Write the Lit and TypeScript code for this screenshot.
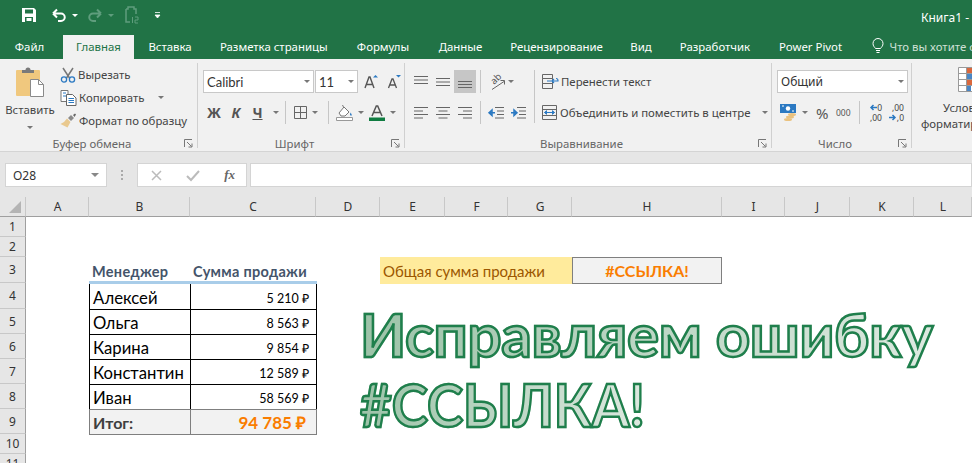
import { LitElement, html, css, svg } from "lit";
import { customElement } from "lit/decorators.js";

const TABS = [
  ["Файл", 63], ["Главная", 71], ["Вставка", 72], ["Разметка страницы", 135.5], ["Формулы", 83],
  ["Данные", 72], ["Рецензирование", 120], ["Вид", 49], ["Разработчик", 99], ["Power Pivot", 92],
] as const;

const COLS = ["A", "B", "C", "D", "E", "F", "G", "H", "I", "J", "K", "L"];
const ROWS = [1, 2, 3, 4, 5, 6, 7, 8, 9, 10, 11];

const SALES = [
  ["Алексей", "5 210 ₽"],
  ["Ольга", "8 563 ₽"],
  ["Карина", "9 854 ₽"],
  ["Константин", "12 589 ₽"],
  ["Иван", "58 569 ₽"],
];

const icon = (w: number, h: number, body: unknown) =>
  html`<svg width=${w} height=${h} viewBox="0 0 ${w} ${h}" fill="none">${body}</svg>`;

const caret = html`<span class="caret"></span>`;
const launcher = icon(9, 9, svg`<path d="M.5 8V.5H8M3 3l4.5 4.5M8 4.5V8H4.5" stroke="#777"/>`);

const lines = (rows: [number, number][], color = "#666") =>
  icon(16, 14, rows.map(([x1, x2], i) => svg`<path d="M${x1} ${1.5 + i * 3.5}H${x2}" stroke=${color}/>`));

const arrowL = icon(8, 7, svg`<path d="M8 3.500H2M4.500 1L2 3.500 4.500 6" stroke="#2b79c2" stroke-width="1.500"/>`);
const arrowR = icon(8, 7, svg`<path d="M0 3.500h6M3.500 1L6 3.500 3.500 6" stroke="#2b79c2" stroke-width="1.500"/>`);

const ICONS = {
  save: icon(16, 16, svg`<path d="M1 1h12l2 2v12H1z" fill="#fff"/><path d="M4 2.500h8v4H4z" fill="#217346"/><path d="M4 10h8v5H4z" fill="#217346"/><path d="M5.500 11h5v3h-5z" fill="#fff"/>`),
  undo: icon(16, 14, svg`<path d="M2 5.500l4-4M2 5.500l4 4M2 5.500h8a3.600 3.600 0 0 1 0 7.500H7" stroke="#fff" stroke-width="2"/>`),
  redo: icon(16, 14, svg`<path d="M14 5.500l-4-4M14 5.500l-4 4M14 5.500H6a3.600 3.600 0 0 0 0 7.500h3" stroke="#5f9d7d" stroke-width="2"/>`),
  touch: icon(16, 18, svg`<path d="M3 3h2V1h6v2h2v5M3 3v13h4" stroke="#5f9d7d" stroke-width="1.500"/><path d="M9.500 11v6M12 11h3v3h-3v3h3" stroke="#5f9d7d"/>`),
  custom: icon(7, 7, svg`<path d="M1 .500h5M1 3h5l-2.500 3z" fill="#fff" stroke="#fff" stroke-width=".8"/>`),
  paste: icon(30, 31, svg`<rect x="1" y="4" width="24" height="26" rx="1" fill="#f0c87e"/><path d="M7 7V4h3.500a2.500 2.500 0 0 1 5 0H19v3z" fill="#7a7a7a"/><path d="M15.500 13.500h8l5 5v12h-13z" fill="#fff" stroke="#8a8a8a"/><path d="M23.500 13.500v5h5" stroke="#8a8a8a"/>`),
  cut: icon(16, 16, svg`<path d="M3 1l6.500 10M13 1L6.500 11" stroke="#777" stroke-width="1.500"/><circle cx="4" cy="12.500" r="2.600" stroke="#2b79c2" stroke-width="1.300"/><circle cx="12" cy="12.500" r="2.600" stroke="#2b79c2" stroke-width="1.300"/>`),
  copy: icon(17, 16, svg`<path d="M1 .500h7v11H1z" fill="#fff" stroke="#777"/><path d="M3 3h3M3 6h3" stroke="#2b79c2"/><path d="M6.500 4.500h6l3.500 3.500v7.500H6.500z" fill="#fff" stroke="#666"/><path d="M8.500 8.500h5.500M8.500 10.500h5.500M8.500 12.500h5.500" stroke="#2b79c2"/>`),
  brush: icon(17, 15, svg`<path d="M8 5l3-3 3 3-3 3z" fill="#8a8a8a"/><path d="M13 2l2-1.500 1 1L14.500 4z" fill="#666"/><path d="M7 5.500l3.500 3.500-3 5.500-7-3.500L4 9z" fill="#e9c98f"/>`),
  grow: icon(14, 15, svg`<path d="M1 14L5 3h1l4 11M2.500 10.500h6" stroke="#555" stroke-width="1.400"/><path d="M9 3.500L11.500 1 14 3.500z" fill="#2b79c2"/>`),
  shrink: icon(14, 15, svg`<path d="M1.500 14L5 5h1l3.500 9M3 11h5" stroke="#555" stroke-width="1.300"/><path d="M9 1h5l-2.500 2.500z" fill="#2b79c2"/>`),
  borders: icon(13, 13, svg`<path d="M.5.500h12v12H.5zM6.500.500v12M.5 6.500h12" stroke="#666"/>`),
  fill: icon(17, 17, svg`<path d="M3 9l5-6 5 5-4 4H5z" fill="#fff" stroke="#777"/><path d="M6.500 1l1.500 3" stroke="#777"/><path d="M14.500 8.500c1 1.500 1.500 2.300 1 3-.6.500-1.500 0-1.500-1z" fill="#2b79c2"/><path d="M.5 13.500h16v3H.5z" fill="#fff" stroke="#999"/>`),
  fontColor: icon(16, 16, svg`<path d="M3 11L7.300 1h1.400L13 11M4.800 7.500h6.400" stroke="#555" stroke-width="1.500"/><path d="M0 12.500h16V16H0z" fill="#107c41"/>`),
  alignTop: lines([[1, 15], [1, 15], [1, 15]]),
  alignMid: icon(16, 14, svg`<path d="M1 3.500h14M1 7h14M1 10.500h14" stroke="#666"/>`),
  alignBot: icon(16, 14, svg`<path d="M1 6.500h14M1 9.500h14M1 12.500h14" stroke="#666"/>`),
  left: lines([[1, 15], [1, 10], [1, 15], [1, 10]]),
  center: lines([[1, 15], [3.5, 12.5], [1, 15], [3.5, 12.5]]),
  right: lines([[1, 15], [6, 15], [1, 15], [6, 15]]),
  orient: icon(17, 16, svg`<text x="2" y="9" transform="rotate(-45 6 6)" font-size="9.500" font-family="Noto Sans, sans-serif" fill="#555">ab</text><path d="M3 15.500l12-8M11.500 6.500H15.500V10.500" stroke="#666"/>`),
  indentL: icon(16, 14, svg`<path d="M7 1.500h9M9 5h7M9 8.500h7M7 12h9" stroke="#666"/><path d="M1 6.800h6M1 6.800l3-2.800v5.600z" stroke="#2b79c2" stroke-width="1.500"/>`),
  indentR: icon(16, 14, svg`<path d="M7 1.500h9M9 5h7M9 8.500h7M7 12h9" stroke="#666"/><path d="M7 6.800H1M7 6.800L4 4v5.600z" stroke="#2b79c2" stroke-width="1.500"/>`),
  wrap: icon(17, 16, svg`<path d="M.5.500h10v4H.5zM.5 4.500h10v5H.5zM.5 9.500h10v5H.5z" stroke="#666"/><path d="M5 7h11v-.5a2 2 0 0 0-2-2M10 7l2-2M10 7l2 2" stroke="#2b79c2" stroke-width="1.100"/>`),
  merge: icon(15, 15, svg`<path d="M.5.500h14v14H.5zM.5 4.500h14M.5 10.500h14" stroke="#666"/><path d="M2.500 7.500h10M2.500 7.500l2-1.800v3.600zM12.500 7.500l-2-1.800v3.600z" stroke="#2b79c2"/>`),
  money: icon(17, 17, svg`<path d="M0 0h16v9H0z" fill="#2b79c2"/><circle cx="8" cy="4.500" r="2.200" fill="#fff"/><path d="M2 2h2M12 7h2" stroke="#fff"/><ellipse cx="12" cy="10.500" rx="4" ry="1.500" fill="#eac27f"/><ellipse cx="10" cy="13" rx="4" ry="1.500" fill="#eac27f"/><ellipse cx="8" cy="15.500" rx="4" ry="1.500" fill="#eac27f"/>`),
  cond: icon(32, 25, svg`<path d="M.5.500h24v24H.5z" fill="#fff" stroke="#999"/><path d="M.5 6.500h24M.5 12.500h24M.5 18.500h24M8.500.500v24" stroke="#999"/><path d="M9 1h6v5H9zM9 13h6v5H9z" fill="#d9683e"/><path d="M9 7h16v5H9zM9 19h4v5H9z" fill="#4a86c5"/>`),
  bulb: icon(12, 16, svg`<path d="M3.500 10.500C2.500 9 1 8 1 5.500a5 5 0 0 1 10 0c0 2.500-1.500 3.500-2.500 5zM4 12.500h4M4.500 14.500h3" stroke="#fff"/>`),
  cancel: icon(11, 11, svg`<path d="M1 1l9 9M10 1l-9 9" stroke="#bbb" stroke-width="1.500"/>`),
  enter: icon(14, 11, svg`<path d="M1 6l4 4 8-9" stroke="#bbb" stroke-width="2"/>`),
  corner: icon(12, 12, svg`<path d="M12 0v12H0z" fill="#b4b4b4"/>`),
};

@customElement("app-root")
export class AppRoot extends LitElement {
  static styles = css`
    :host {
      display: block;
      width: 972px;
      height: 463px;
      overflow: hidden;
      font-family: "Noto Sans", "Open Sans", sans-serif;
      font-size: 11.4px;
      color: #444;
      background: #fff;
    }
    svg { display: block; flex: none; overflow: visible; }
    .title {
      height: 35px;
      background: #217346;
      display: flex;
      align-items: center;
      padding-left: 21px;
      color: #fff;
      white-space: nowrap;
      overflow: hidden;
    }
    .qat { display: flex; align-items: center; margin-top: -5px; }
    .undo { margin-left: 14px; }
    .qat .caret { border-top-color: #fff; margin: 0 0 0 5px; }
    .qat .caret.dim { border-top-color: #5f9d7d; }
    .redo { margin-left: 9px; }
    .touch { margin-left: 9px; }
    .custom { margin-left: 15px; }
    .book { margin-left: auto; width: 51px; font-size: 12px; margin-top: -1px; }
    .tabs {
      height: 24px;
      background: #217346;
      display: flex;
      color: #fff;
      white-space: nowrap;
      overflow: hidden;
    }
    .tab { display: flex; align-items: center; justify-content: center; padding-bottom: 2px; flex: none; box-sizing: border-box; }
    .tab:first-child { padding-right: 4px; }
    .tab.active { background: #f1f1f1; color: #217346; }
    .tell { display: flex; align-items: center; gap: 6px; margin-left: 15px; color: #cfe0d6; padding-bottom: 2px; }
    .ribbon {
      height: 92px;
      background: #f1f1f1;
      display: grid;
      grid-template-columns: 198px 207px 367px 140px 1fr;
      border-bottom: 1px solid #d4d4d4;
      overflow: hidden;
    }
    .group { display: flex; flex-direction: column; position: relative; }
    .group::after {
      content: "";
      position: absolute;
      right: 0;
      top: 4px;
      bottom: 3px;
      width: 1px;
      background: #d0d0d0;
    }
    .body { height: 77px; display: flex; }
    .label { height: 14px; display: flex; align-items: center; color: #666; }
    .label span { flex: 1; text-align: center; }
    .launch { width: 14px; }
    .paste { width: 60px; display: flex; flex-direction: column; align-items: center; padding-top: 7px; }
    .paste .name { margin-top: 5px; }
    .paste .caret { margin: 9px 0 0; }
    .clip { display: flex; flex-direction: column; padding-top: 4px; }
    .clip div { height: 23px; display: flex; align-items: center; gap: 2px; white-space: nowrap; }
    .clip .caret { margin-left: 12px; }
    .rows { display: flex; flex-direction: column; gap: 8px; padding-top: 11px; }
    .row { height: 23px; display: flex; align-items: center; }
    .font { padding-left: 5px; }
    .combo {
      height: 23px;
      box-sizing: border-box;
      background: #fff;
      border: 1px solid #c8c8c8;
      display: flex;
      align-items: center;
      padding: 0 3px;
      font-family: Lato, "Open Sans", sans-serif;
      font-size: 13px;
      color: #333;
    }
    .combo .caret { margin: 0 0 0 auto; border-top-color: #777; }
    .face { width: 111px; }
    .size { width: 43px; margin-left: 1px; }
    .grow { margin-left: 6px; }
    .shrink { margin-left: 9px; }
    .caret {
      display: block;
      flex: none;
      width: 0;
      height: 0;
      border: 3px solid transparent;
      border-top: 3px solid #777;
      border-bottom: 0;
      margin: 0 5px;
    }
    .bold {
      width: 22px;
      text-align: center;
      font-size: 14px;
      font-weight: 700;
      color: #555;
    }
    .bold.it { font-style: italic; }
    .bold.un { text-decoration: underline; width: 21px; }
    .sep { width: 1px; height: 23px; background: #c6c6c6; flex: none; }
    .btn { width: 22px; height: 23px; display: flex; align-items: center; justify-content: center; flex: none; }
    .btn.on { background: #c6c6c6; }
    .font .row2 .sep.a { margin: 0 8px 0 1px; }
    .font .row2 .sep.b { margin: 0 7px 0 5px; }
    .align { padding-left: 5px; gap: 0; }
    .align .cols { display: grid; grid-template-columns: 22px 22px 22px 4px 1px 4px 22px 22px; grid-template-rows: 23px 23px; row-gap: 8px; padding-top: 11px; }
    .align .sep { grid-column: 5; }
    .btn.orient { grid-column: 7; width: 33px; gap: 2px; }
    .btn.orient .caret { margin: 0; }
    .merge-sep { width: 1px; height: 53px; background: #c6c6c6; margin: 11px 7px 0 5px; flex: none; }
    .txt { display: flex; align-items: center; gap: 3px; white-space: nowrap; }
    .txt.wrap { gap: 2px; }
    .txt .caret { margin-left: 9px; }
    .num { padding-left: 5px; }
    .num .combo { width: 131px; font-family: "Noto Sans", sans-serif; font-size: 12px; }
    .num .row > .caret { margin: 0 3px; }
    .pct { width: 14px; margin-left: 5px; font-size: 15px; color: #555; }
    .th { margin-left: 6px; width: 15px; font-size: 8.500px; color: #555; white-space: nowrap; }
    .num .sep { margin: 0 6px 0 8px; }
    .dec { width: 16px; margin-right: 6px; font-size: 8.500px; line-height: 10px; color: #444; display: flex; flex-direction: column; align-items: flex-end; }
    .dec div { display: flex; align-items: center; height: 10px; }
    .cond { width: 114px; display: flex; flex-direction: column; align-items: center; padding-top: 8px; text-align: center; line-height: 16px; white-space: nowrap; }
    .cond svg { margin: 0 0 8px 10px; }
    .fbar {
      height: 45px;
      background: #e6e6e6;
      display: flex;
      align-items: center;
      padding-top: 1px;
      box-sizing: border-box;
    }
    .box { height: 24px; box-sizing: border-box; background: #fff; border: 1px solid #d4d4d4; display: flex; align-items: center; }
    .name-box { width: 102px; margin-left: 5px; padding: 0 7px; font-size: 12px; color: #333; }
    .name-box .caret { margin: 0 0 0 auto; border-width: 4px; border-top-color: #888; border-bottom: 0; }
    .dots { width: 2px; height: 10px; margin: 0 14px; background: repeating-linear-gradient(#aaa 0 2px, transparent 2px 4px); flex: none; }
    .fx-box { width: 110px; justify-content: space-between; padding: 0 11px 0 13px; font-family: "Liberation Serif", serif; font-style: italic; font-weight: 700; font-size: 13px; color: #666; }
    .input { flex: 1; margin-left: 3px; }
    .sheet {
      position: relative;
      display: grid;
      grid-template-columns: 26px 63px 101px 126px 64px 65px 63px 64px 150px 63px 65px 64px 58px;
      grid-template-rows: 20px 20px 20px 26px 26px 25px 25px 25px 25px 25px 20px 20px;
      font-family: Lato, "Open Sans", sans-serif;
    }
    .head {
      background: #e6e6e6;
      color: #333;
      font-size: 12px;
      display: flex;
      align-items: center;
      justify-content: center;
      box-sizing: border-box;
      font-family: "Noto Sans", sans-serif;
    }
    .corner { grid-row: 1; grid-column: 1; border-bottom: 1px solid #9f9f9f; border-right: 1px solid #c8c8c8; justify-content: flex-end; align-items: flex-end; padding: 0 4px 3px 0; }
    .colh { grid-row: 1; border-bottom: 1px solid #9f9f9f; border-right: 1px solid #c8c8c8; padding-left: 1px; }
    .rowh { grid-column: 1; border-bottom: 1px solid #c8c8c8; border-right: 1px solid #9f9f9f; }
    .cell { display: flex; align-items: center; box-sizing: border-box; white-space: nowrap; margin: 0 -1px -1px 0; }
    .th-cell {
      position: relative;
      z-index: 1;
      font-weight: 700;
      color: #44546a;
      font-size: 14.500px;
      letter-spacing: .3px;
      border-bottom: 3px solid #a9cde9;
      align-items: flex-end;
      padding: 0 0 1px 3px;
    }
    .td { border: 1px solid #000; color: #000; }
    .td.name { font-size: 16.700px; padding: 2px 0 0 3px; }
    .td.sum { font-size: 12.500px; justify-content: flex-end; align-items: flex-end; padding: 0 7px 2px 0; }
    .tot { border: 1px solid #7f7f7f; background: #f2f2f2; font-weight: 700; }
    .tot.name { font-size: 16px; color: #3f3f3f; padding-left: 3px; }
    .tot.sum { font-size: 17px; color: #fa7d00; justify-content: flex-end; padding-right: 10px; }
    .input-cell { grid-column: 6 / 9; grid-row: 4; background: #ffeb9c; color: #9c5700; font-size: 15px; padding: 1px 0 0 3px; margin: 0 0 -1px 0; }
    .check { grid-column: 9; grid-row: 4; background: #f2f2f2; border: 1px solid #7f7f7f; color: #fa7d00; font-weight: 700; font-size: 16px; justify-content: center; margin: 0 0 -1px 0; }
    .art {
      position: absolute;
      left: 360px;
      top: 102px;
      font-weight: 700;
      font-size: 60px;
      line-height: 70px;
      white-space: nowrap;
      color: transparent;
      letter-spacing: -.3px;
    }
    .art div {
      width: fit-content;
      background: linear-gradient(90deg, #9cc3a8, #dde9e0);
      -webkit-background-clip: text;
      background-clip: text;
      -webkit-text-stroke: 2.500px #1f7f4c;
    }
    .art .short { letter-spacing: 0; transform: scaleX(.91); transform-origin: left center; }
  `;

  private renderRibbon() {
    return html`
      <div class="ribbon">
        <div class="group">
          <div class="body">
            <div class="paste">${ICONS.paste}<span class="name">Вставить</span>${caret}</div>
            <div class="clip">
              <div>${ICONS.cut}Вырезать</div>
              <div>${ICONS.copy}Копировать${caret}</div>
              <div>${ICONS.brush}Формат по образцу</div>
            </div>
          </div>
          <div class="label"><span>Буфер обмена</span><div class="launch">${launcher}</div></div>
        </div>
        <div class="group">
          <div class="body font">
            <div class="rows">
              <div class="row">
                <div class="combo face">Calibri${caret}</div>
                <div class="combo size">11${caret}</div>
                <span class="grow">${ICONS.grow}</span>
                <span class="shrink">${ICONS.shrink}</span>
              </div>
              <div class="row row2">
                <span class="bold">Ж</span><span class="bold it">К</span><span class="bold un">Ч</span>${caret}
                <span class="sep a"></span>${ICONS.borders}${caret}
                <span class="sep b"></span>${ICONS.fill}${caret}${ICONS.fontColor}${caret}
              </div>
            </div>
          </div>
          <div class="label"><span>Шрифт</span><div class="launch">${launcher}</div></div>
        </div>
        <div class="group">
          <div class="body align">
            <div class="cols">
              <div class="btn">${ICONS.alignTop}</div>
              <div class="btn">${ICONS.alignMid}</div>
              <div class="btn on">${ICONS.alignBot}</div>
              <span></span>
              <span class="sep"></span>
              <span></span>
              <div class="btn orient">${ICONS.orient}${caret}</div>
              <span></span>
              <div class="btn">${ICONS.left}</div>
              <div class="btn">${ICONS.center}</div>
              <div class="btn">${ICONS.right}</div>
              <span></span>
              <span class="sep"></span>
              <span></span>
              <div class="btn">${ICONS.indentL}</div>
              <div class="btn">${ICONS.indentR}</div>
            </div>
            <span class="merge-sep"></span>
            <div class="rows">
              <div class="row txt wrap">${ICONS.wrap}Перенести текст</div>
              <div class="row txt">${ICONS.merge}Объединить и поместить в центре${caret}</div>
            </div>
          </div>
          <div class="label"><span>Выравнивание</span><div class="launch">${launcher}</div></div>
        </div>
        <div class="group">
          <div class="body num">
            <div class="rows">
              <div class="combo">Общий${caret}</div>
              <div class="row">
                <div class="btn">${ICONS.money}</div>${caret}
                <span class="pct">%</span>
                <span class="th">000</span>
                <span class="sep"></span>
                <span class="dec"><div>${arrowL}0</div><div>,00</div></span>
                <span class="dec"><div>,00</div><div>${arrowR},0</div></span>
              </div>
            </div>
          </div>
          <div class="label"><span>Число</span><div class="launch">${launcher}</div></div>
        </div>
        <div class="group">
          <div class="cond">${ICONS.cond}<span>Условное</span><span>форматирование</span></div>
        </div>
      </div>
    `;
  }

  private renderSheet() {
    return html`
      <div class="sheet">
        <div class="head corner">${ICONS.corner}</div>
        ${COLS.map((c, i) => html`<div class="head colh" style="grid-column:${i + 2}">${c}</div>`)}
        ${ROWS.map((r) => html`<div class="head rowh" style="grid-row:${r + 1}">${r}</div>`)}

        <div class="cell th-cell" style="grid-row:4;grid-column:3">Менеджер</div>
        <div class="cell th-cell" style="grid-row:4;grid-column:4">Сумма продажи</div>
        ${SALES.map(([name, sum], i) => html`
          <div class="cell td name" style="grid-row:${i + 5};grid-column:3">${name}</div>
          <div class="cell td sum" style="grid-row:${i + 5};grid-column:4">${sum}</div>
        `)}
        <div class="cell tot name" style="grid-row:10;grid-column:3">Итог:</div>
        <div class="cell tot sum" style="grid-row:10;grid-column:4">94 785 ₽</div>

        <div class="cell input-cell">Общая сумма продажи</div>
        <div class="cell check">#ССЫЛКА!</div>

        <div class="art"><div>Исправляем ошибку</div><div class="short">#ССЫЛКА!</div></div>
      </div>
    `;
  }

  render() {
    return html`
      <div class="title">
        <div class="qat">
          ${ICONS.save}
          <span class="undo">${ICONS.undo}</span>${caret}
          <span class="redo">${ICONS.redo}</span><span class="caret dim"></span>
          <span class="touch">${ICONS.touch}</span>
          <span class="custom">${ICONS.custom}</span>
        </div>
        <div class="book">Книга1 - Excel</div>
      </div>
      <div class="tabs">
        ${TABS.map(([name, w], i) => html`<div class="tab ${i === 1 ? "active" : ""}" style="width:${w}px">${name}</div>`)}
        <div class="tell">${ICONS.bulb}Что вы хотите сделать?</div>
      </div>
      ${this.renderRibbon()}
      <div class="fbar">
        <div class="box name-box">O28<span class="caret"></span></div>
        <span class="dots"></span>
        <div class="box fx-box">${ICONS.cancel}${ICONS.enter}<span>fx</span></div>
        <div class="box input"></div>
      </div>
      ${this.renderSheet()}
    `;
  }
}
